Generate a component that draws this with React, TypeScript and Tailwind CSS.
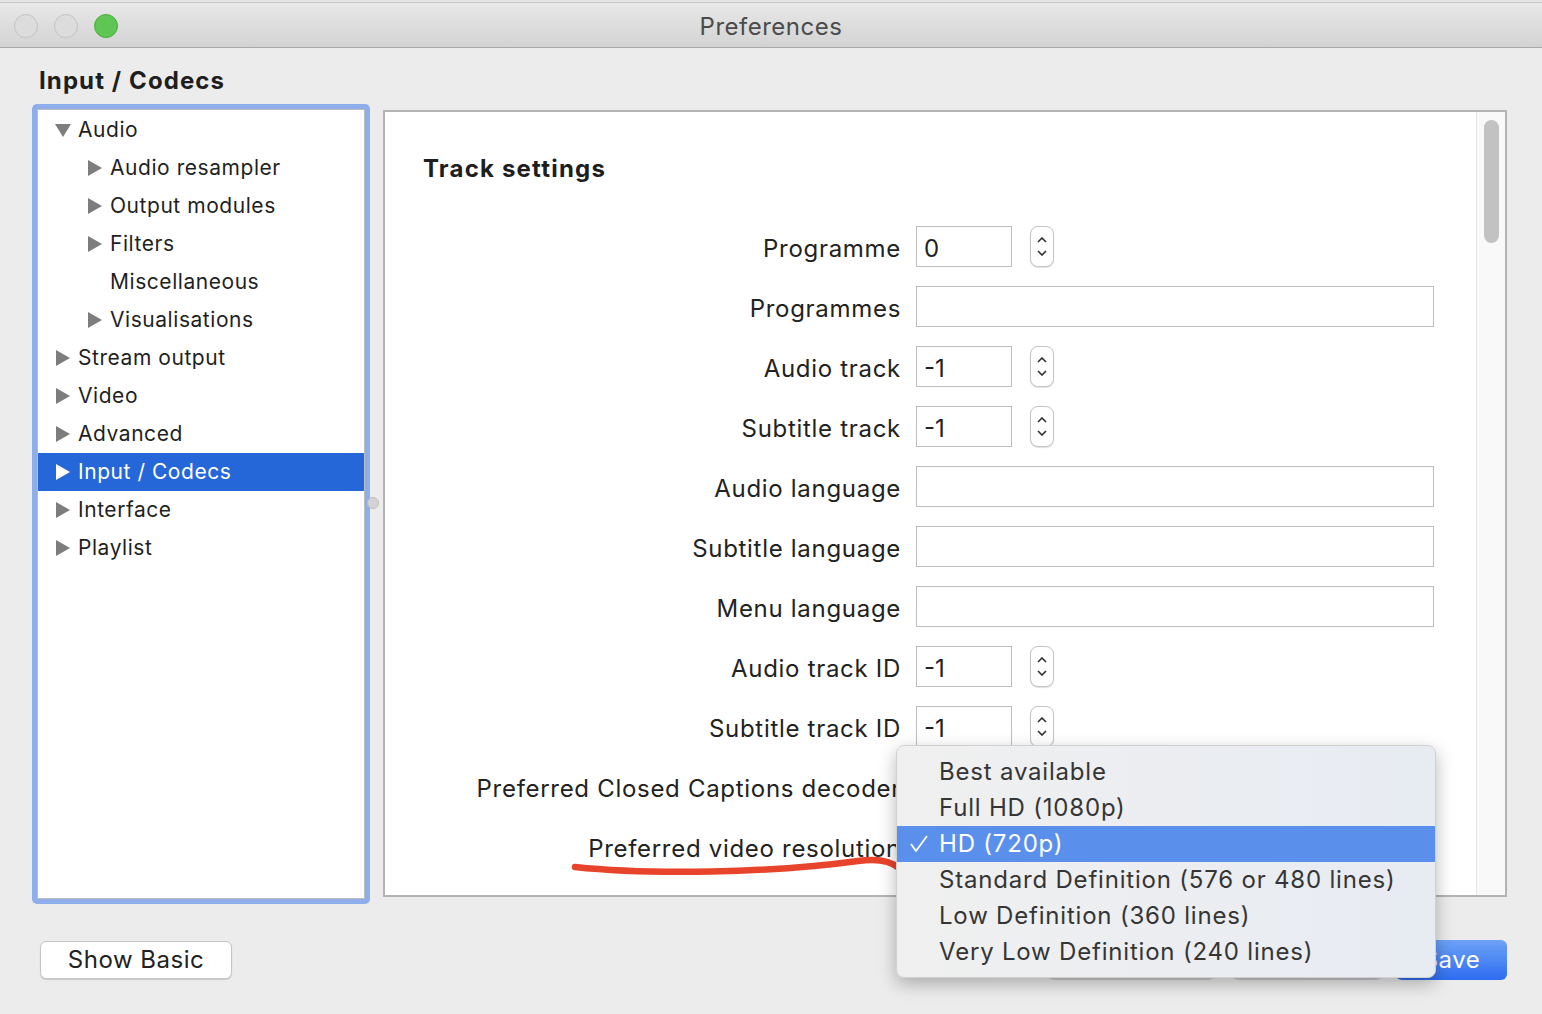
import React from 'react';

type TreeItem = { label: string; level: 0 | 1; arrow: 'down' | 'right' | null; selected?: boolean };

const tree: TreeItem[] = [
  { label: 'Audio', level: 0, arrow: 'down' },
  { label: 'Audio resampler', level: 1, arrow: 'right' },
  { label: 'Output modules', level: 1, arrow: 'right' },
  { label: 'Filters', level: 1, arrow: 'right' },
  { label: 'Miscellaneous', level: 1, arrow: null },
  { label: 'Visualisations', level: 1, arrow: 'right' },
  { label: 'Stream output', level: 0, arrow: 'right' },
  { label: 'Video', level: 0, arrow: 'right' },
  { label: 'Advanced', level: 0, arrow: 'right' },
  { label: 'Input / Codecs', level: 0, arrow: 'right', selected: true },
  { label: 'Interface', level: 0, arrow: 'right' },
  { label: 'Playlist', level: 0, arrow: 'right' },
];

type Row = { label: string; kind: 'spin' | 'text' | 'none'; value?: string };

const rows: Row[] = [
  { label: 'Programme', kind: 'spin', value: '0' },
  { label: 'Programmes', kind: 'text' },
  { label: 'Audio track', kind: 'spin', value: '-1' },
  { label: 'Subtitle track', kind: 'spin', value: '-1' },
  { label: 'Audio language', kind: 'text' },
  { label: 'Subtitle language', kind: 'text' },
  { label: 'Menu language', kind: 'text' },
  { label: 'Audio track ID', kind: 'spin', value: '-1' },
  { label: 'Subtitle track ID', kind: 'spin', value: '-1' },
  { label: 'Preferred Closed Captions decoder', kind: 'none' },
  { label: 'Preferred video resolution', kind: 'none' },
];

const resolutions = [
  'Best available',
  'Full HD (1080p)',
  'HD (720p)',
  'Standard Definition (576 or 480 lines)',
  'Low Definition (360 lines)',
  'Very Low Definition (240 lines)',
];

function Arrow({ dir, white }: { dir: 'down' | 'right'; white?: boolean }) {
  const fill = white ? '#ffffff' : '#7d7d7d';
  if (dir === 'down') {
    return (
      <svg width="16" height="16" viewBox="0 0 16 16" className="shrink-0">
        <polygon points="0,2 16,2 8,15" fill={fill} />
      </svg>
    );
  }
  return (
    <svg width="16" height="16" viewBox="0 0 16 16" className="shrink-0">
      <polygon points="1,0 15,8 1,16" fill={fill} />
    </svg>
  );
}

function Spinner() {
  return (
    <div className="ml-[18px] w-[24px] h-[41px] rounded-[8px] border border-[#c4c4c4] bg-white shadow-[0_1px_1px_rgba(0,0,0,0.12)] flex flex-col items-center justify-center gap-[7px]">
      <svg width="10" height="6" viewBox="0 0 10 6"><polyline points="1,5 5,1 9,5" fill="none" stroke="#2e2e2e" strokeWidth="1.6" /></svg>
      <svg width="10" height="6" viewBox="0 0 10 6"><polyline points="1,1 5,5 9,1" fill="none" stroke="#2e2e2e" strokeWidth="1.6" /></svg>
    </div>
  );
}

export default function App() {
  return (
    <div className="relative w-[1542px] h-[1014px] overflow-hidden bg-[#ececec] font-['Inter','Noto_Sans',sans-serif] text-[#222]">
      {/* window chrome */}
      <div className="h-[3px] bg-[#e4e4e4] border-b border-[#c9c9c9]" />
      <div className="relative h-[45px] bg-gradient-to-b from-[#e8e8e8] to-[#d3d3d3] border-b border-[#a8a8a8] flex items-center">
        <div className="flex items-center gap-[16px] pl-[14px] pt-[2px]">
          <span className="w-[24px] h-[24px] rounded-full bg-[#dcdcdc] border border-[#c3c3c3]" />
          <span className="w-[24px] h-[24px] rounded-full bg-[#dcdcdc] border border-[#c3c3c3]" />
          <span className="w-[24px] h-[24px] rounded-full bg-[#5fc553] border border-[#4aad40]" />
        </div>
        <div className="absolute inset-0 pt-[4px] flex items-center justify-center text-[24px] text-[#4b4b4b] tracking-[0.5px]">Preferences</div>
      </div>

      <h1 className="ml-[39px] mt-[18px] h-[30px] leading-[30px] text-[24px] font-bold text-[#1e1e1e] tracking-[1.1px]">Input / Codecs</h1>

      <div className="flex ml-[32px] mt-[8px]">
        {/* category tree */}
        <div className="w-[338px] h-[800px] rounded-[5px] bg-[#8eadeb] p-[5px]">
          <div className="h-full bg-white border border-[#bcbcbc] pt-[1px]">
            {tree.map((t) => (
              <div
                key={t.label}
                className={`h-[38px] flex items-center gap-[7px] text-[21px] tracking-[0.55px] ${t.selected ? 'bg-[#2566d9] text-white' : 'text-[#1f1f1f]'} ${t.level === 0 ? 'pl-[17px]' : 'pl-[49px]'}`}
              >
                {t.arrow ? <Arrow dir={t.arrow} white={t.selected} /> : <span className="w-[16px] shrink-0" />}
                <span>{t.label}</span>
              </div>
            ))}
          </div>
        </div>

        {/* splitter */}
        <div className="w-[13px] flex items-center justify-start">
          <span className="relative ml-[-3px] w-[12px] h-[12px] rounded-full bg-[#d4d4d4] border border-[#bdbdbd] mt-[-2px]" />
        </div>

        {/* settings panel */}
        <div className="mt-[6px] w-[1124px] h-[787px] bg-white border-2 border-[#b4b4b4] flex overflow-hidden">
          <div className="flex-1 overflow-hidden">
            <h2 className="ml-[38px] mt-[42px] h-[30px] leading-[30px] text-[24px] font-bold text-[#1e1e1e] tracking-[1.2px]">Track settings</h2>
            <div className="mt-[35px]">
              {rows.map((r) => (
                <div key={r.label} className="h-[60px] flex items-center">
                  <div className="w-[516px] shrink-0 text-right text-[24px] text-[#222] whitespace-nowrap tracking-[0.7px]">{r.label}</div>
                  <div className="ml-[15px] mb-[5px] flex items-center">
                    {r.kind === 'spin' && (
                      <>
                        <div className="w-[96px] h-[41px] border border-[#bdbdbd] flex items-center pl-[7px] pt-[4px] text-[24px] text-[#222]">{r.value}</div>
                        <Spinner />
                      </>
                    )}
                    {r.kind === 'text' && <div className="w-[518px] h-[41px] border border-[#bdbdbd]" />}
                  </div>
                </div>
              ))}
            </div>
          </div>
          <div className="w-[29px] shrink-0 bg-[#f9f9f9] border-l border-[#e6e6e6] pt-[8px] flex justify-center">
            <div className="w-[15px] h-[123px] rounded-full bg-[#c2c2c2]" />
          </div>
        </div>
      </div>

      {/* bottom buttons */}
      <div className="flex items-center mt-[36px] pl-[40px] pr-[35px]">
        <button className="w-[192px] h-[38px] rounded-[6px] bg-white border border-[#c6c6c6] shadow-[0_1px_1px_rgba(0,0,0,0.15)] text-[24px] text-[#222] tracking-[0.5px]">Show Basic</button>
        <div className="flex-1" />
        <div className="w-[166px] h-[38px] rounded-[6px] bg-white border border-[#c6c6c6] shadow-[0_1px_1px_rgba(0,0,0,0.15)]" />
        <div className="ml-[18px] w-[150px] h-[38px] rounded-[6px] bg-white border border-[#c6c6c6] shadow-[0_1px_1px_rgba(0,0,0,0.15)]" />
        <button className="ml-[14px] w-[111px] h-[40px] rounded-[6px] bg-gradient-to-b from-[#6ea2f7] to-[#2d6cf0] text-[24px] text-white tracking-[0.5px]">Save</button>
      </div>

      {/* red annotation */}
      <svg className="absolute left-0 top-0 pointer-events-none" width="1542" height="1014">
        <path d="M575 867 C 650 875, 770 873, 858 861 Q 886 857, 899 868" fill="none" stroke="#e8432b" strokeWidth="6.5" strokeLinecap="round" />
      </svg>

      {/* popup menu */}
      <div className="absolute left-[896px] top-[745px] w-[540px] h-[233px] rounded-[8px] bg-gradient-to-r from-[#f0f0f0] to-[#e7ebf2] border border-[#d0d0d0] shadow-[0_6px_18px_rgba(0,0,0,0.28)] pt-[8px] overflow-hidden">
        {resolutions.map((r, i) => (
          <div key={r} className={`h-[36px] flex items-center text-[24px] tracking-[0.8px] ${i === 2 ? 'bg-[#5b8fec] text-white' : 'text-[#353535]'}`}>
            <span className="w-[42px] pl-[12px] flex items-center">
              {i === 2 && (
                <svg width="20" height="20" viewBox="0 0 20 20"><polyline points="2,10 7,17 18,2" fill="none" stroke="#ffffff" strokeWidth="1.8" strokeLinejoin="round" /></svg>
              )}
            </span>
            <span>{r}</span>
          </div>
        ))}
      </div>
    </div>
  );
}
